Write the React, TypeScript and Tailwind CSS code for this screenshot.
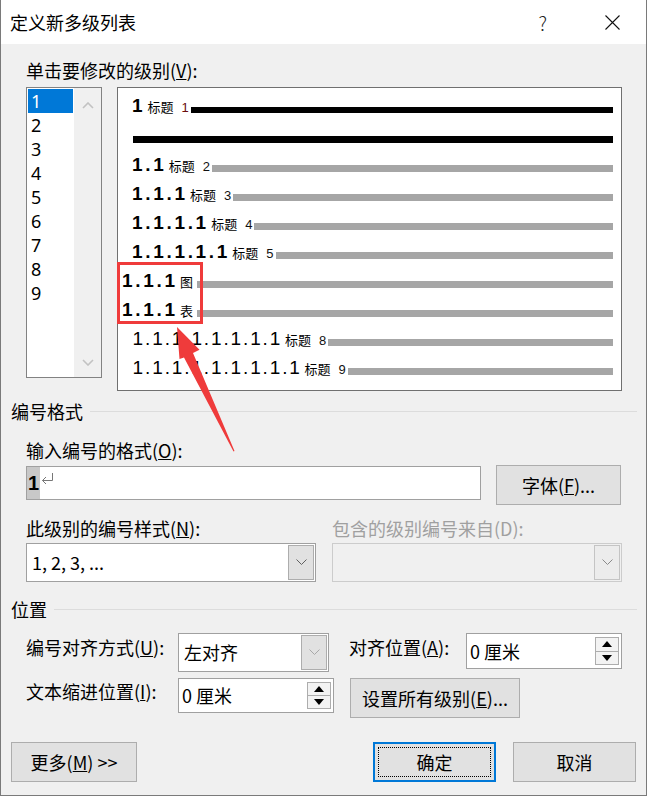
import React from 'react';

const LEVELS = ['1', '2', '3', '4', '5', '6', '7', '8', '9'];

// one character per fixed cell, like the half-width digits in Word's preview
function Num({ text, bold = true }: { text: string; bold?: boolean }) {
  return (
    <span className={`flex font-['Liberation_Sans',sans-serif] text-[19px] leading-none ${bold ? 'font-bold' : 'font-normal'}`}>
      {text.split('').map((ch, i) => (
        <span key={i} className={`inline-flex justify-center ${bold ? 'w-[10.6px]' : 'w-[9.8px]'}`}>{ch}</span>
      ))}
    </span>
  );
}

type RowProps = {
  num: string;
  label: string;
  suffix?: string;
  bold?: boolean;
  pad: string;
  height?: string;
  line?: string;
  suffixColor?: string;
};

function PreviewRow({ num, label, suffix, bold = true, pad, height = 'h-[29px]', line = 'bg-[#a6a6a6] h-[7px]', suffixColor = 'text-[#111]' }: RowProps) {
  return (
    <div className={`flex items-end ${height} ${pad}`}>
      <div className="flex items-baseline -mb-[2px]">
        <Num text={num} bold={bold} />
        <span className="ml-[5px] text-[13px] leading-none">{label}</span>
        {suffix && (
          <span className={`ml-[8px] font-['Liberation_Sans',sans-serif] text-[13px] leading-none ${suffixColor}`}>{suffix}</span>
        )}
      </div>
      <div className={`flex-1 ${suffix ? 'ml-[2px]' : 'ml-[4px]'} ${line}`} />
    </div>
  );
}

function Chevron({ color = '#606060' }: { color?: string }) {
  return (
    <svg width="11" height="7" viewBox="0 0 11 7">
      <polyline points="0.5,0.5 5.5,5.5 10.5,0.5" fill="none" stroke={color} strokeWidth="1" />
    </svg>
  );
}

function Combo({ value, width, disabled = false, chevron = '#606060' }: { value?: string; width: string; disabled?: boolean; chevron?: string }) {
  return (
    <div className={`flex h-[39px] ${width} border ${disabled ? 'border-[#cccccc] bg-[#f0f0f0]' : 'border-[#a0a0a0] bg-white'} p-[1px]`}>
      <div className="flex-1 flex items-center pl-[4px] text-[18px]">{value}</div>
      <div className={`w-[26px] flex items-center justify-center border ${disabled ? 'border-[#c4c4c4] bg-[#ececec]' : 'border-[#adadad] bg-[#e1e1e1]'}`}>
        <Chevron color={chevron} />
      </div>
    </div>
  );
}

function Spin({ value, width, height }: { value: string; width: string; height: string }) {
  return (
    <div className={`flex ${width} ${height} border border-[#a0a0a0] bg-white py-[3px] pr-[2px]`}>
      <div className="flex-1 flex items-center pl-[3px] text-[18px]">{value}</div>
      <div className="w-[24px] flex flex-col">
        <div className="flex-1 flex items-center justify-center border border-[#adadad] bg-[#f3f3f3]">
          <svg width="10" height="6" viewBox="0 0 10 6"><polygon points="5,0 10,6 0,6" fill="#000" /></svg>
        </div>
        <div className="flex-1 flex items-center justify-center border border-t-0 border-[#adadad] bg-[#f3f3f3]">
          <svg width="10" height="6" viewBox="0 0 10 6"><polygon points="0,0 10,0 5,6" fill="#000" /></svg>
        </div>
      </div>
    </div>
  );
}

function Button({ children, width, className = '' }: { children: React.ReactNode; width: string; className?: string }) {
  return (
    <div className={`${width} h-[40px] border border-[#adadad] bg-[#e1e1e1] flex items-center justify-center text-[18px] ${className}`}>
      {children}
    </div>
  );
}

function GroupHeader({ title }: { title: string }) {
  return (
    <div className="flex items-center pl-[10px] pr-[9px] leading-[24px]">
      <span>{title}</span>
      <div className="flex-1 h-px bg-[#dcdcdc] ml-[7px]" />
    </div>
  );
}

export default function App() {
  return (
    <div className="relative w-[647px] h-[796px] bg-[#f0f0f0] border-x border-b border-[#7a7a7a] font-['Noto_Sans_CJK_SC',sans-serif] text-[18px] text-black overflow-hidden">
      {/* Title bar */}
      <div className="h-[44px] bg-white flex items-center pl-[9px]">
        <span className="text-[18px] leading-none">定义新多级列表</span>
        <span className="ml-auto text-[19px] font-light leading-none text-[#222]">?</span>
        <svg className="ml-[58px] mr-[26px]" width="15" height="15" viewBox="0 0 15 15">
          <path d="M0.5 0.5 L14.5 14.5 M14.5 0.5 L0.5 14.5" stroke="#111" strokeWidth="1.1" />
        </svg>
      </div>

      <div className="pl-[25px]">
        <div className="mt-[14px] leading-[24px]">单击要修改的级别(<u>V</u>):</div>
        <div className="mt-[5px] flex items-start">
          {/* Level list */}
          <div className="w-[76px] h-[291px] border border-[#828282] bg-white flex">
            <div className="w-[47px] p-[1px] font-['Noto_Sans',sans-serif] text-[18px]">
              {LEVELS.map((l, i) => (
                <div key={l} className={`h-[24px] leading-[24px] pl-[3px] ${i === 0 ? 'bg-[#0078d7] text-white' : ''}`}>{l}</div>
              ))}
            </div>
            <div className="flex-1 bg-[#f0f0f0] flex flex-col items-center justify-between pt-[14px] pb-[11px]">
              <svg width="12" height="7" viewBox="0 0 12 7"><polyline points="1,6 6,1 11,6" fill="none" stroke="#c2c2c2" strokeWidth="1.6" /></svg>
              <svg width="12" height="7" viewBox="0 0 12 7"><polyline points="1,1 6,6 11,1" fill="none" stroke="#c2c2c2" strokeWidth="1.6" /></svg>
            </div>
          </div>

          {/* Preview */}
          <div className="relative ml-[15px] w-[505px] h-[304px] border border-[#707070] bg-white pr-[8px]">
            <PreviewRow num="1" label="标题" suffix="1" pad="pl-[14px]" height="h-[25px]" line="bg-black h-[6px]" suffixColor="text-[#6a0c0c]" />
            <div className="h-[30px] flex items-end pl-[15px]">
              <div className="flex-1 h-[7px] bg-black" />
            </div>
            <PreviewRow num="1.1" label="标题" suffix="2" pad="pl-[14px]" />
            <PreviewRow num="1.1.1" label="标题" suffix="3" pad="pl-[14px]" />
            <PreviewRow num="1.1.1.1" label="标题" suffix="4" pad="pl-[14px]" />
            <PreviewRow num="1.1.1.1.1" label="标题" suffix="5" pad="pl-[14px]" />
            <PreviewRow num="1.1.1" label="图" pad="pl-[4px]" />
            <PreviewRow num="1.1.1" label="表" pad="pl-[4px]" />
            <PreviewRow num="1.1.1.1.1.1.1.1" label="标题" suffix="8" bold={false} pad="pl-[15px]" />
            <PreviewRow num="1.1.1.1.1.1.1.1.1" label="标题" suffix="9" bold={false} pad="pl-[15px]" />

            {/* annotation box */}
            <div className="absolute left-[-1px] top-[174px] w-[86px] h-[62px] border-[3px] border-[#ef3b3b]" />
          </div>
        </div>
      </div>

      <div className="mt-[8px]">
        <GroupHeader title="编号格式" />
      </div>

      <div className="pl-[25px]">
        <div className="mt-[15px] leading-[24px]">输入编号的格式(<u>O</u>):</div>
        <div className="mt-[3px] flex items-start">
          <div className="mt-[1px] w-[455px] h-[34px] border border-[#a0a0a0] bg-white flex items-stretch">
            <span className="w-[13px] bg-[#c8c8c8] flex items-center justify-center font-['Liberation_Sans',sans-serif] font-bold text-[20px]">1</span>
            <svg className="mt-[5px] ml-[1px]" width="13" height="13" viewBox="0 0 13 13">
              <path d="M11.5 1 V8.5 H1.5 M5 5 L1.5 8.5 L5 12" fill="none" stroke="#777" strokeWidth="1" />
            </svg>
          </div>
          <Button width="w-[125px] ml-[15px]">字体(<u>F</u>)...</Button>
        </div>

        <div className="mt-[11px] flex leading-[24px]">
          <span className="w-[306px]">此级别的编号样式(<u>N</u>):</span>
          <span className="text-[#a0a0a0]">包含的级别编号来自(D):</span>
        </div>
        <div className="mt-[3px] flex">
          <Combo value="1, 2, 3, ..." width="w-[290px]" />
          <div className="ml-[16px]">
            <Combo width="w-[290px]" disabled chevron="#8a8a8a" />
          </div>
        </div>
      </div>

      <div className="mt-[15px]">
        <GroupHeader title="位置" />
      </div>

      <div className="pl-[25px]">
        <div className="mt-[12px] flex items-start">
          <span className="w-[152px] mt-[2px] leading-[24px]">编号对齐方式(<u>U</u>):</span>
          <Combo value="左对齐" width="w-[151px]" chevron="#a8a8a8" />
          <span className="ml-[20px] w-[117px] mt-[2px] leading-[24px]">对齐位置(<u>A</u>):</span>
          <Spin value="0 厘米" width="w-[156px]" height="h-[36px]" />
        </div>
        <div className="mt-[6px] flex items-start">
          <span className="w-[152px] mt-[1px] leading-[24px]">文本缩进位置(<u>I</u>):</span>
          <Spin value="0 厘米" width="w-[156px]" height="h-[35px]" />
          <Button width="w-[170px] ml-[16px]">设置所有级别(<u>E</u>)...</Button>
        </div>
      </div>

      <div className="mt-[24px] flex px-[10px]">
        <Button width="w-[126px]">更多(<u>M</u>) &gt;&gt;</Button>
        <div className="ml-auto w-[123px] h-[40px] border-2 border-[#0078d7] bg-[#e1e1e1] p-[3px]">
          <div className="h-full border border-dotted border-black flex items-center justify-center text-[18px]">确定</div>
        </div>
        <Button width="w-[123px] ml-[17px]">取消</Button>
      </div>

      {/* red arrow pointing at the annotation box */}
      <svg className="absolute left-0 top-0 pointer-events-none" width="647" height="796" viewBox="0 0 647 796">
        <polygon
          points="176,327 198.5,349.7 192,353 233.5,451 232.5,451.4 183,357.5 178.5,358.9"
          fill="#ef3b3b"
        />
      </svg>
    </div>
  );
}
